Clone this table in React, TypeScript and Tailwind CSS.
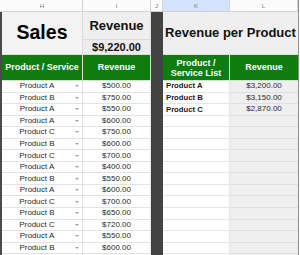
import React from "react";

const sales = [
  ["Product A", "$500.00"],
  ["Product B", "$750.00"],
  ["Product A", "$550.00"],
  ["Product A", "$600.00"],
  ["Product C", "$750.00"],
  ["Product B", "$600.00"],
  ["Product C", "$700.00"],
  ["Product A", "$400.00"],
  ["Product B", "$550.00"],
  ["Product A", "$600.00"],
  ["Product C", "$700.00"],
  ["Product B", "$650.00"],
  ["Product C", "$720.00"],
  ["Product A", "$550.00"],
  ["Product B", "$600.00"],
  ["", ""],
];

const totals = [
  ["Product A", "$3,200.00"],
  ["Product B", "$3,150.00"],
  ["Product C", "$2,870.00"],
];

function ColHead({ label, active }: { label: string; active?: boolean }) {
  return (
    <div
      className={`flex items-center justify-center border-r border-b border-[#d4d4d4] text-[6px] leading-none text-[#777] ${
        active ? "bg-[#d3e3fd]" : "bg-[#fbfbfb]"
      }`}
    >
      {label}
    </div>
  );
}

export default function App() {
  return (
    <div className="w-[300px] h-[255px] overflow-hidden bg-white font-['Liberation_Sans',Arial,sans-serif]">
      <div className="grid grid-cols-[2px_81px_68px_12px_67px_68px_2px] grid-rows-[12px_28px_15px_26px_repeat(16,11.55px)]">
        {/* frozen dark strips */}
        <div className="col-start-1 [grid-row:2/-1] bg-[#4a4a4a]"></div>
        <div className="col-start-4 [grid-row:2/-1] bg-[#434343]"></div>
        <div className="col-start-7 [grid-row:1/-1] bg-white border-l border-[#8f8f8f]"></div>

        {/* column letters */}
        <div className="bg-[#fbfbfb] border-b border-[#d4d4d4]"></div>
        <ColHead label="H" />
        <ColHead label="I" />
        <ColHead label="J" />
        <ColHead label="K" active />
        <ColHead label="L" />

        {/* title block */}
        <div className="row-span-2 flex items-center justify-center bg-[#f3f3f3] border-r border-b border-[#dcdcdc] text-[19.5px] font-bold text-black">
          Sales
        </div>
        <div className="flex items-center justify-center bg-[#efefef] border-r border-b border-[#dcdcdc] text-[13px] font-bold text-[#111]">
          Revenue
        </div>
        <div className="col-span-2 row-span-2 flex items-center justify-center whitespace-nowrap bg-[#efefef] border-b border-[#dcdcdc] text-[13px] font-bold text-[#111]">
          Revenue per Product
        </div>
        <div className="flex items-center justify-center bg-[#ececec] border-r border-b border-[#dcdcdc] text-[11px] font-bold text-[#111]">
          $9,220.00
        </div>

        {/* green headers */}
        <div className="flex items-center justify-center bg-[#0e7c0e] border-r border-b border-[#cfe3cf] text-[9px] font-bold text-white">
          Product / Service
        </div>
        <div className="flex items-center justify-center bg-[#0e7c0e] border-r border-b border-[#cfe3cf] text-[9px] font-bold text-white">
          Revenue
        </div>
        <div className="flex items-center justify-center bg-[#0e7c0e] border-r border-b border-[#cfe3cf] px-1 text-center text-[9px] leading-[10px] font-bold text-white">
          Product / Service List
        </div>
        <div className="flex items-center justify-center bg-[#0e7c0e] border-b border-[#cfe3cf] text-[9px] font-bold text-white">
          Revenue
        </div>

        {/* data rows */}
        {sales.map(([product, amount], i) => (
          <React.Fragment key={i}>
            <div className="flex items-center bg-white border-r border-b border-[#e3e3e3]">
              <span className="flex-1 text-center text-[8px] leading-none text-[#2a2a2a]">{product}</span>
              {product && (
                <span className="flex w-[10px] justify-center">
                  <svg width="4" height="2" viewBox="0 0 4 2">
                    <polygon points="0,0 4,0 2,2" fill="#a0a0a0" />
                  </svg>
                </span>
              )}
            </div>
            <div className="flex items-center justify-center bg-white border-r border-b border-[#e3e3e3] text-[8px] leading-none text-[#2a2a2a]">
              {amount}
            </div>
            <div className="flex items-center bg-white border-r border-b border-[#e6e6e6] pl-[3px] text-[7.7px] leading-none font-bold text-[#1a1a1a]">
              {totals[i]?.[0]}
            </div>
            <div className="flex items-center justify-center bg-[#efefef] border-b border-[#e0e0e0] text-[8px] leading-none text-[#2a2a2a]">
              {totals[i]?.[1]}
            </div>
          </React.Fragment>
        ))}
      </div>
    </div>
  );
}
